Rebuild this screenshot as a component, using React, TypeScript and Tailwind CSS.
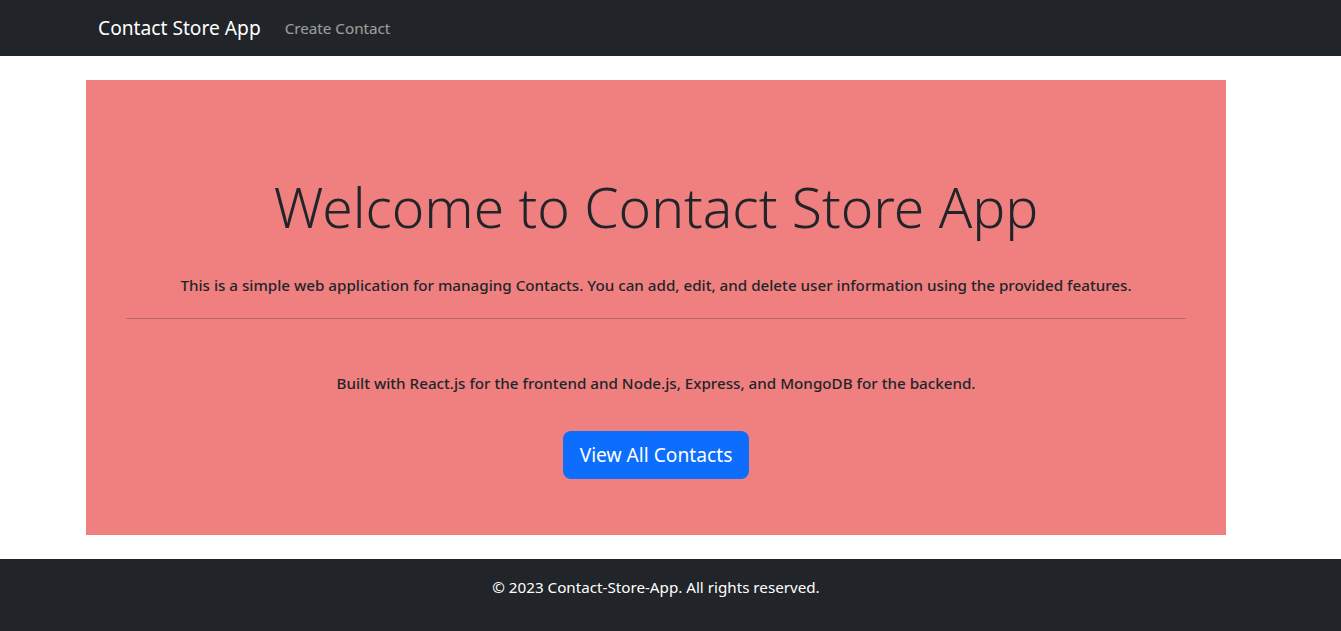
export default function App() {
  const font = { fontFamily: '"Noto Sans", "Open Sans", sans-serif' };
  return (
    <div className="min-h-[631px] bg-white flex flex-col" style={font}>
      <nav className="h-[56px] bg-[#212529] flex items-center">
        <div className="ml-[98px] flex items-center">
          <span className="text-[19.2px] text-white leading-[30px]">Contact Store App</span>
          <span className="ml-[24px] text-[15.2px] text-white/55 leading-[24px]">Create Contact</span>
        </div>
      </nav>
      <div className="ml-[86px] w-[1140px] mt-[24px] bg-[#f08080] flex flex-col items-center pt-[93px] pb-[56px] px-[40px]">
        <h1 className="text-[55.2px] font-light leading-[67px] text-[#212529]">Welcome to Contact Store App</h1>
        <p className="mt-[33px] text-[15.2px] font-medium leading-[24px] text-[#212529]">
          This is a simple web application for managing Contacts. You can add, edit, and delete user information using the provided features.
        </p>
        <hr className="mt-[21px] w-full border-0 border-t border-[#212529]/25" />
        <p className="mt-[52px] text-[15.2px] font-medium leading-[24px] text-[#212529]">
          Built with React.js for the frontend and Node.js, Express, and MongoDB for the backend.
        </p>
        <button className="mt-[36px] h-[48px] px-[17px] rounded-[8px] bg-[#0d6efd] text-white text-[19.2px] leading-[30px]">
          View All Contacts
        </button>
      </div>
      <footer className="mt-[24px] h-[72px] bg-[#212529] pt-[16px]">
        <div className="ml-[86px] w-[1140px] text-center">
          <span className="text-white text-[15.2px] leading-[24px]">© 2023 Contact-Store-App. All rights reserved.</span>
        </div>
      </footer>
    </div>
  );
}
